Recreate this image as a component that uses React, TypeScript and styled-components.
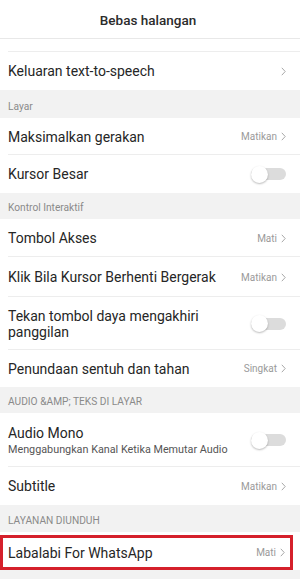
import React from "react";
import styled, { createGlobalStyle } from "styled-components";

const Global = createGlobalStyle`
  html, body { margin: 0; padding: 0; background: #f2f2f2; }
  body { font-family: Roboto, "Noto Sans", "Liberation Sans", sans-serif; -webkit-font-smoothing: antialiased; }
  * { box-sizing: border-box; }
`;

const Screen = styled.div`
  width: 300px;
  min-height: 579px;
  background: #f2f2f2;
  display: flex;
  flex-direction: column;
`;

const Header = styled.div`
  height: 39px;
  background: #fff;
  border-bottom: 1px solid #e8e8e8;
  display: flex;
  align-items: center;
  justify-content: center;
  font-size: 13.5px;
  font-weight: 500;
  color: #2b2b2b;
  padding: 1px 4px 0 0;
`;

const Group = styled.div`
  background: #fff;
  display: flex;
  flex-direction: column;
`;

const SectionHeader = styled.div<{ $h: number }>`
  height: ${(p) => p.$h}px;
  display: flex;
  align-items: flex-end;
  padding: 0 8px 6px;
  font-size: 10.2px;
  color: #8a8a8a;
  background: #f2f2f2;
`;

const Row = styled.div<{ $h: number; $last?: boolean; $highlight?: boolean }>`
  height: ${(p) => p.$h}px;
  display: flex;
  align-items: center;
  padding: 0 14px 0 8px;
  position: relative;
  background: #fff;
  ${(p) =>
    p.$highlight
      ? `border: 3px solid #d5202b; margin: 3px 7px 0 0; padding: 0 5px 0 5px;`
      : ""}
  &::after {
    content: "";
    display: ${(p) => (p.$last || p.$highlight ? "none" : "block")};
    position: absolute;
    left: 8px;
    right: 0;
    bottom: 0;
    height: 1px;
    background: #ededed;
  }
`;

const Texts = styled.div`
  flex: 1;
  display: flex;
  flex-direction: column;
  min-width: 0;
`;

const Title = styled.div`
  font-size: 14px;
  color: #262626;
  line-height: 16px;
`;

const Sub = styled.div`
  font-size: 10.8px;
  color: #555;
  margin-top: 2px;
`;

const Value = styled.div`
  display: flex;
  align-items: center;
  gap: 4px;
  font-size: 10px;
  color: #9a9a9a;
`;

const Chevron = styled.svg`
  width: 5px;
  height: 9px;
`;

const Toggle = styled.div`
  width: 35px;
  height: 16px;
  position: relative;
  display: flex;
  align-items: center;
  margin-right: 0;
`;

const Track = styled.div`
  width: 100%;
  height: 12px;
  border-radius: 6px;
  background: #dcdcdc;
`;

const Knob = styled.div`
  position: absolute;
  left: 0;
  top: -0.5px;
  width: 17px;
  height: 17px;
  border-radius: 50%;
  background: #fff;
  box-shadow: 0 1px 2px rgba(0, 0, 0, 0.28);
`;

const Arrow = () => (
  <Chevron viewBox="0 0 5 9">
    <path d="M0.8 0.8 L4.2 4.5 L0.8 8.2" fill="none" stroke="#a8a8a8" strokeWidth="1" />
  </Chevron>
);

const Val = ({ t }: { t?: string }) => (
  <Value>
    {t}
    <Arrow />
  </Value>
);

const Switch = () => (
  <Toggle>
    <Track />
    <Knob />
  </Toggle>
);

export default function App() {
  return (
    <>
      <Global />
      <Screen>
        <Header>Bebas halangan</Header>
        <Group>
          <Row $h={13} />
          <Row $h={38} $last>
            <Texts><Title>Keluaran text-to-speech</Title></Texts>
            <Val />
          </Row>
        </Group>
        <SectionHeader $h={28}>Layar</SectionHeader>
        <Group>
          <Row $h={37}>
            <Texts><Title>Maksimalkan gerakan</Title></Texts>
            <Val t="Matikan" />
          </Row>
          <Row $h={38} $last>
            <Texts><Title>Kursor Besar</Title></Texts>
            <Switch />
          </Row>
        </Group>
        <SectionHeader $h={26}>Kontrol Interaktif</SectionHeader>
        <Group>
          <Row $h={38}>
            <Texts><Title>Tombol Akses</Title></Texts>
            <Val t="Mati" />
          </Row>
          <Row $h={40}>
            <Texts><Title>Klik Bila Kursor Berhenti Bergerak</Title></Texts>
            <Val t="Matikan" />
          </Row>
          <Row $h={53}>
            <Texts><Title>Tekan tombol daya mengakhiri<br />panggilan</Title></Texts>
            <Switch />
          </Row>
          <Row $h={37} $last>
            <Texts><Title>Penundaan sentuh dan tahan</Title></Texts>
            <Val t="Singkat" />
          </Row>
        </Group>
        <SectionHeader $h={26}>AUDIO &amp;AMP; TEKS DI LAYAR</SectionHeader>
        <Group>
          <Row $h={54}>
            <Texts>
              <Title>Audio Mono</Title>
              <Sub>Menggabungkan Kanal Ketika Memutar Audio</Sub>
            </Texts>
            <Switch />
          </Row>
          <Row $h={38} $last>
            <Texts><Title>Subtitle</Title></Texts>
            <Val t="Matikan" />
          </Row>
        </Group>
        <SectionHeader $h={27}>LAYANAN DIUNDUH</SectionHeader>
        <Group>
          <Row $h={35} $highlight>
            <Texts><Title>Labalabi For WhatsApp</Title></Texts>
            <Val t="Mati" />
          </Row>
        </Group>
      </Screen>
    </>
  );
}
